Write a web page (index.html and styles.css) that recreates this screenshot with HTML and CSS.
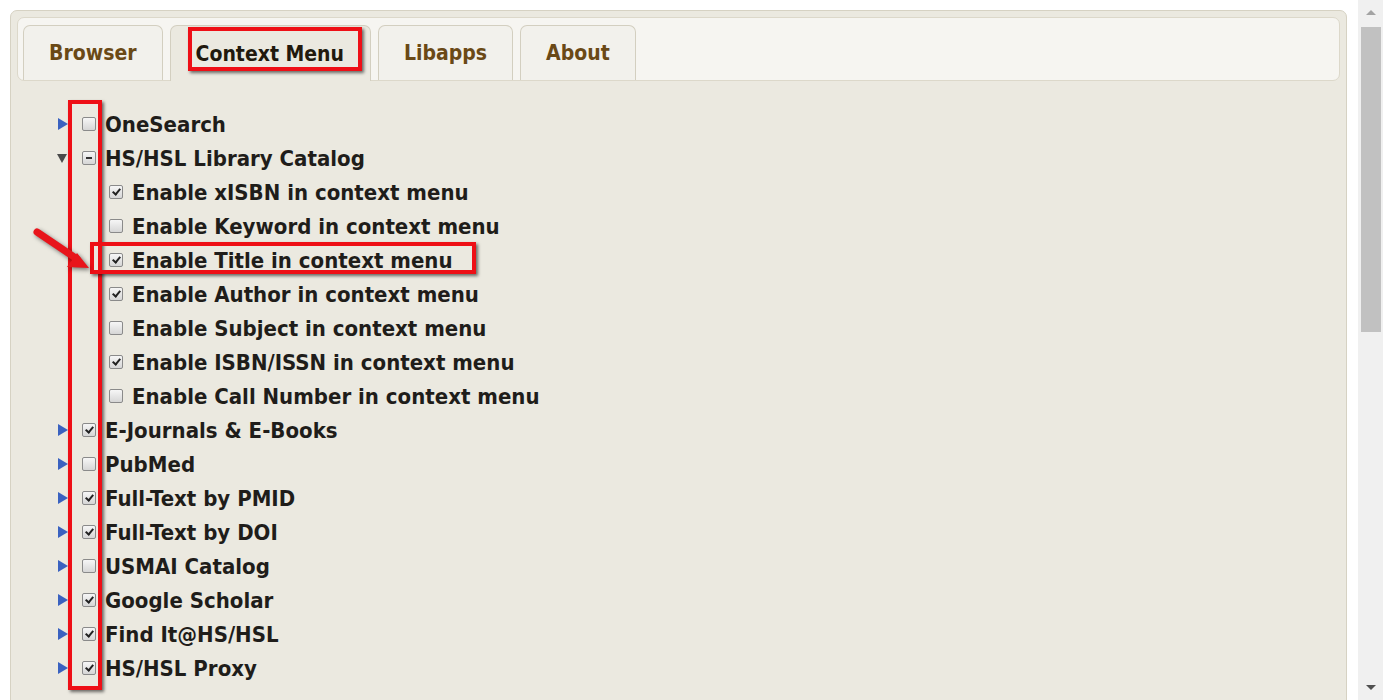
FILE: index.html
```html
<!DOCTYPE html>
<html lang="en">
<head>
    <meta charset="UTF-8">
    <title>Options - Context Menu</title>
    <link rel="stylesheet" href="styles.css">
</head>
<body>
    <div class="page">
        <div class="panel">
            <ul class="tabs">
                <li class="tab">Browser</li>
                <li class="tab active">Context Menu</li>
                <li class="tab">Libapps</li>
                <li class="tab">About</li>
            </ul>

            <ul class="tree">
                <li class="node"><span class="toggle closed"></span><span class="box"></span><span class="label">OneSearch</span></li>
                <li class="node"><span class="toggle open"></span><span class="box partial"></span><span class="label">HS/HSL Library Catalog</span></li>
                <li class="node child"><span class="box checked"></span><span class="label">Enable xISBN in context menu</span></li>
                <li class="node child"><span class="box"></span><span class="label">Enable Keyword in context menu</span></li>
                <li class="node child"><span class="box checked"></span><span class="label">Enable Title in context menu</span></li>
                <li class="node child"><span class="box checked"></span><span class="label">Enable Author in context menu</span></li>
                <li class="node child"><span class="box"></span><span class="label">Enable Subject in context menu</span></li>
                <li class="node child"><span class="box checked"></span><span class="label">Enable ISBN/ISSN in context menu</span></li>
                <li class="node child"><span class="box"></span><span class="label">Enable Call Number in context menu</span></li>
                <li class="node"><span class="toggle closed"></span><span class="box checked"></span><span class="label">E-Journals &amp; E-Books</span></li>
                <li class="node"><span class="toggle closed"></span><span class="box"></span><span class="label">PubMed</span></li>
                <li class="node"><span class="toggle closed"></span><span class="box checked"></span><span class="label">Full-Text by PMID</span></li>
                <li class="node"><span class="toggle closed"></span><span class="box checked"></span><span class="label">Full-Text by DOI</span></li>
                <li class="node"><span class="toggle closed"></span><span class="box"></span><span class="label">USMAI Catalog</span></li>
                <li class="node"><span class="toggle closed"></span><span class="box checked"></span><span class="label">Google Scholar</span></li>
                <li class="node"><span class="toggle closed"></span><span class="box checked"></span><span class="label">Find It@HS/HSL</span></li>
                <li class="node"><span class="toggle closed"></span><span class="box checked"></span><span class="label">HS/HSL Proxy</span></li>
            </ul>
        </div>
    </div>

    <div class="scrollbar">
        <div class="arrow up"></div>
        <div class="thumb"></div>
        <div class="track"></div>
        <div class="arrow down"></div>
    </div>

    <!-- red annotations drawn over the screenshot -->
    <div class="mark mark-tab"></div>
    <div class="mark mark-column"></div>
    <div class="mark mark-row"></div>
    <svg class="pointer" width="70" height="60" viewBox="0 0 70 60">
        <line x1="6" y1="6" x2="46" y2="33" stroke="#e8141b" stroke-width="7" stroke-linecap="round"/>
        <polygon points="58,42 36,41 46,27" fill="#e8141b"/>
    </svg>
</body>
</html>
```

FILE: styles.css
```css
html, body {
    margin: 0;
    height: 700px;
    overflow: hidden;
}

body {
    display: flex;
    background: #ffffff;
    font-family: "DejaVu Sans Condensed", "DejaVu Sans", sans-serif;
    font-weight: bold;
    color: #1f1d1a;
}

.page {
    flex: 1;
    padding: 10px 10px 0 10px;
}

.panel {
    height: 700px;
    box-sizing: border-box;
    border: 1px solid #d6d2c3;
    border-radius: 7px;
    background: #ebe9e0;
    padding: 6px;
}

/* tab strip */
.tabs {
    list-style: none;
    margin: 0;
    padding: 6px 0 0 5px;
    height: 56px;
    display: flex;
    gap: 7px;
    align-items: flex-end;
    background: #f6f5f1;
    border: 1px solid #dcd8ca;
    border-radius: 7px;
}

.tab {
    height: 55px;
    box-sizing: border-box;
    padding: 0 25px;
    display: flex;
    align-items: center;
    font-size: 21px;
    color: #6a4916;
    background: #f2f1ec;
    border: 1px solid #d3cfc0;
    border-bottom: none;
    border-radius: 7px 7px 0 0;
}

.tab.active {
    background: #ebe9e0;
    color: #21190d;
    margin-bottom: -1px;
    height: 56px;
    padding: 0 26px 0 25px;
}

/* tree of checkboxes */
.tree {
    list-style: none;
    margin: 0;
    padding: 26px 0 0 40px;
}

.node {
    display: flex;
    align-items: center;
    height: 34px;
    font-size: 22px;
}

.node.child {
    padding-left: 52px;
}

.toggle {
    width: 25px;
    height: 12px;
    position: relative;
}

.toggle.closed::before {
    content: "";
    position: absolute;
    left: 1px;
    top: 0;
    border-left: 10px solid #3a62c0;
    border-top: 6px solid transparent;
    border-bottom: 6px solid transparent;
}

.toggle.open::before {
    content: "";
    position: absolute;
    left: 0;
    top: 2px;
    border-top: 9px solid #4a4a4a;
    border-left: 5px solid transparent;
    border-right: 5px solid transparent;
}

.box {
    width: 14px;
    height: 14px;
    box-sizing: border-box;
    border: 1px solid #8a8a8a;
    border-radius: 2px;
    background: linear-gradient(#f6f6f6, #d6d6d6);
    margin-right: 9px;
    position: relative;
}

.box.checked::after {
    content: "";
    position: absolute;
    left: 4px;
    top: 1px;
    width: 3px;
    height: 6px;
    border-right: 2px solid #222;
    border-bottom: 2px solid #222;
    transform: rotate(40deg);
}

.box.partial::after {
    content: "";
    position: absolute;
    left: 3px;
    top: 5px;
    width: 6px;
    height: 2px;
    background: #333;
}

.label {
    white-space: nowrap;
}

/* fake scrollbar on the right */
.scrollbar {
    width: 25px;
    margin-left: 1px;
    height: 700px;
    background: #f0f0f0;
    display: flex;
    flex-direction: column;
    align-items: center;
}

.arrow {
    height: 25px;
    width: 100%;
    position: relative;
}

.arrow.up::before {
    content: "";
    position: absolute;
    left: 8px;
    top: 10px;
    border-bottom: 5px solid #a3a3a3;
    border-left: 5px solid transparent;
    border-right: 5px solid transparent;
}

.arrow.down::before {
    content: "";
    position: absolute;
    left: 8px;
    top: 10px;
    border-top: 5px solid #505050;
    border-left: 5px solid transparent;
    border-right: 5px solid transparent;
}

.thumb {
    width: 20px;
    height: 305px;
    margin-top: 2px;
    background: #c1c1c1;
}

.track {
    flex: 1;
}

/* annotation marks */
.mark {
    position: absolute;
    border: 4px solid #ee0f16;
    box-shadow: 2px 2px 3px rgba(0, 0, 0, 0.55);
}

.mark-tab {
    left: 188px;
    top: 27px;
    width: 166px;
    height: 36px;
}

.mark-column {
    left: 68px;
    top: 100px;
    width: 26px;
    height: 582px;
}

.mark-row {
    left: 90px;
    top: 242px;
    width: 378px;
    height: 24px;
}

.pointer {
    position: absolute;
    left: 31px;
    top: 226px;
    filter: drop-shadow(2px 2px 2px rgba(0, 0, 0, 0.5));
}
```
